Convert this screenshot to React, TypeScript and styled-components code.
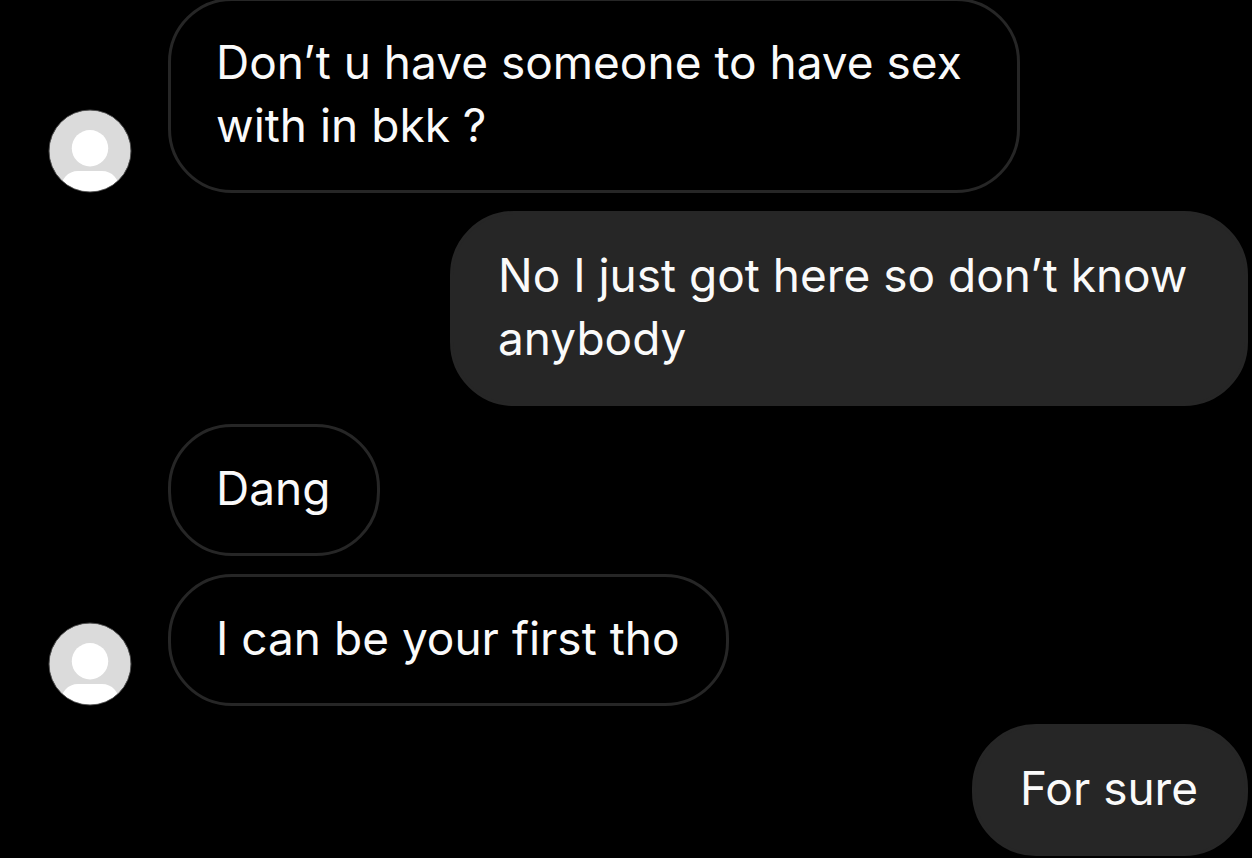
import React from "react";
import styled, { createGlobalStyle } from "styled-components";

const GlobalStyle = createGlobalStyle`
  * {
    box-sizing: border-box;
  }

  body {
    margin: 0;
    background: #000;
    color: #fafafa;
    font-family: Inter, "Liberation Sans", sans-serif;
    font-size: 46px;
    line-height: 63px;
  }
`;

/* The newest message stays at the bottom; older ones run off the top. */
const Thread = styled.main`
  display: flex;
  flex-direction: column;
  justify-content: flex-end;
  gap: 18px;
  height: 100vh;
  padding: 0 4px 2px 48px;
  overflow: hidden;
`;

const Row = styled.article<{ $sent?: boolean }>`
  display: flex;
  flex-shrink: 0;
  align-items: flex-end;
  justify-content: ${(p) => (p.$sent ? "flex-end" : "flex-start")};
  gap: 36px;
`;

const AvatarSlot = styled.div`
  display: flex;
  flex: 0 0 84px;
`;

const Bubble = styled.p<{ $sent?: boolean }>`
  margin: 0;
  max-width: ${(p) => (p.$sent ? "798px" : "852px")};
  padding: 30px 47px 33px 45px;
  border: 3px solid #262626;
  border-radius: 64px;
  background: ${(p) => (p.$sent ? "#262626" : "transparent")};
`;

function Avatar() {
  return (
    <svg width="84" height="84" viewBox="0 0 84 84" role="img" aria-label="Profile picture">
      <defs>
        <clipPath id="avatar-disc">
          <circle cx="42" cy="42" r="40.5" />
        </clipPath>
      </defs>
      <circle cx="42" cy="42" r="40.8" fill="#dbdbdb" />
      <g clipPath="url(#avatar-disc)" fill="#fff">
        <circle cx="42" cy="39.2" r="18.2" />
        <path d="M12 84 C12 70 20 62 30 62 H54 C64 62 72 70 72 84 Z" />
      </g>
      <circle cx="42" cy="42" r="41" fill="none" stroke="#5a5a5a" strokeWidth="0.8" />
    </svg>
  );
}

type Message = { text: string; sent?: boolean; avatar?: boolean };

const messages: Message[] = [
  { text: "Don’t u have someone to have sex with in bkk ?", avatar: true },
  { text: "No I just got here so don’t know anybody", sent: true },
  { text: "Dang" },
  { text: "I can be your first tho", avatar: true },
  { text: "For sure", sent: true },
];

export default function App() {
  return (
    <>
      <GlobalStyle />
      <Thread>
        {messages.map((m) => (
          <Row key={m.text} $sent={m.sent}>
            {!m.sent && <AvatarSlot>{m.avatar && <Avatar />}</AvatarSlot>}
            <Bubble $sent={m.sent}>{m.text}</Bubble>
          </Row>
        ))}
      </Thread>
    </>
  );
}
